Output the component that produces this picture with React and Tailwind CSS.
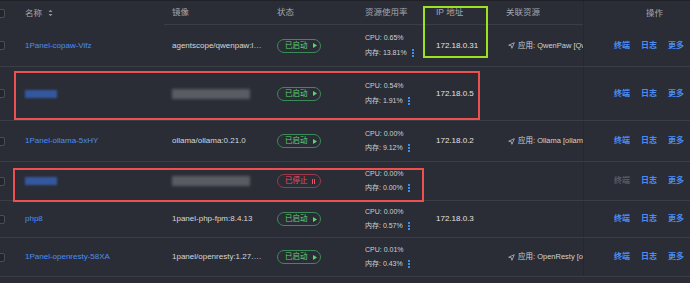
const rows = [
  { h: "h-[42px]", name: "1Panel-copaw-Vifz", image: "agentscope/qwenpaw:latest", running: true, cpu: "0.65%", mem: "13.81%", ip: "172.18.0.31", app: "应用: QwenPaw [QwenPaw]" },
  { h: "h-[54px]", blur: true, running: true, cpu: "0.54%", mem: "1.91%", ip: "172.18.0.5" },
  { h: "h-[41px]", name: "1Panel-ollama-5xHY", image: "ollama/ollama:0.21.0", running: true, cpu: "0.00%", mem: "9.12%", ip: "172.18.0.2", app: "应用: Ollama [ollama]" },
  { h: "h-[39px]", blur: true, running: false, cpu: "0.00%", mem: "0.00%", ip: "" },
  { h: "h-[37px]", name: "php8", image: "1panel-php-fpm:8.4.13", running: true, cpu: "0.00%", mem: "0.57%", ip: "172.18.0.3" },
  { h: "h-[39px]", name: "1Panel-openresty-58XA", image: "1panel/openresty:1.27.1.2-2-1-focal", running: true, cpu: "0.01%", mem: "0.43%", ip: "", app: "应用: OpenResty [openresty]" },
];

function Checkbox() {
  return <span className="block w-[9px] h-[9px] -ml-[4px] rounded-[2px] border border-[#4a4d56] bg-[#23252c]" />;
}

function SortIcon() {
  return (
    <svg width="5" height="8" viewBox="0 0 5 8" className="ml-[6px]">
      <path d="M0.5 3 L2.5 0.8 L4.5 3 Z" fill="#8e9199" />
      <path d="M0.5 5 L2.5 7.2 L4.5 5 Z" fill="#8e9199" />
    </svg>
  );
}

function StatusPill({ running }) {
  if (running) {
    return (
      <span className="inline-flex items-center h-[14px] w-[44px] pl-[7px] rounded-full border border-[#3c8a5a] text-[7.5px] text-[#5fd36f]">
        已启动
        <svg width="4" height="5" viewBox="0 0 4 5" className="ml-[5px]"><path d="M0 0 L4 2.5 L0 5 Z" fill="#5fd36f" /></svg>
      </span>
    );
  }
  return (
    <span className="inline-flex items-center h-[14px] w-[44px] pl-[7px] rounded-full border border-[#9b3a4b] text-[7.5px] text-[#ee4d66]">
      已停止
      <span className="ml-[4px] flex gap-[1.5px]">
        <span className="w-[1px] h-[5px] bg-[#ee4d66]" />
        <span className="w-[1px] h-[5px] bg-[#ee4d66]" />
      </span>
    </span>
  );
}

function DotsIcon() {
  return (
    <span className="ml-[5px] inline-flex flex-col gap-[1px]">
      <span className="w-[2px] h-[2px] bg-[#3a8ff0]" />
      <span className="w-[2px] h-[2px] bg-[#3a8ff0]" />
      <span className="w-[2px] h-[2px] bg-[#3a8ff0]" />
    </span>
  );
}

function PositionIcon() {
  return (
    <svg width="7" height="7" viewBox="0 0 10 10" className="mr-[3px] shrink-0">
      <path d="M1 4.6 L9 1 L5.6 9 L4.8 5.4 Z" fill="none" stroke="#c9cbd0" strokeWidth="1" strokeLinejoin="round" />
    </svg>
  );
}

export default function App() {
  return (
    <div className="relative w-[690px] h-[283px] overflow-hidden bg-[#2a2d35] border-t border-[#1f2127] text-[8px] text-[#d6d7da]" style={{ fontFamily: '"Liberation Sans", "Noto Sans CJK SC", sans-serif' }}>
      {/* header */}
      <div className="flex h-[24px] items-stretch text-[8.5px] text-[#a4a7ae]">
        <div className="w-[25px] flex items-center"><Checkbox /></div>
        <div className="w-[139px] flex items-center">名称<SortIcon /></div>
        <div className="w-[105px] pl-[8px] flex items-center border-b border-[#3a3d46]">镜像</div>
        <div className="w-[88px] pl-[8px] flex items-center border-b border-[#3a3d46]">状态</div>
        <div className="w-[71px] pl-[8px] flex items-center border-b border-[#3a3d46]">资源使用率</div>
        <div className="w-[70px] pl-[8px] flex items-center border-b border-[#3a3d46]">IP 地址</div>
        <div className="w-[85px] pl-[8px] flex items-center border-b border-[#3a3d46]">关联资源</div>
        <div className="w-[107px] pl-[62px] flex items-center border-l border-[#25272e]">操作</div>
      </div>

      {rows.map((r, i) => (
        <div key={i} className={`flex ${r.h} items-stretch border-b border-[#3a3d46]`}>
          <div className="w-[25px] flex items-center"><Checkbox /></div>
          <div className="w-[139px] flex items-center text-[#4a8ef5]">
            {r.blur ? <span className="w-[32px] h-[8px] bg-[#3358a0] blur-[1px]" /> : r.name}
          </div>
          <div className="w-[105px] pl-[8px] flex items-center">
            {r.blur ? (
              <span className="w-[78px] h-[10px] bg-[#5a5c63] blur-[1.5px]" />
            ) : (
              <span className="max-w-[90px] truncate">{r.image}</span>
            )}
          </div>
          <div className="w-[88px] pl-[8px] flex items-center"><StatusPill running={r.running} /></div>
          <div className="w-[71px] pl-[8px] flex flex-col justify-center gap-[4px] text-[7px] text-[#cfd0d4]">
            <span>CPU: {r.cpu}</span>
            <span className="flex items-center">内存: {r.mem}<DotsIcon /></span>
          </div>
          <div className="w-[70px] pl-[8px] flex items-center text-[8px] text-[#e2e3e6]">{r.ip}</div>
          <div className="w-[85px] pl-[10px] flex items-center overflow-hidden whitespace-nowrap text-[7.5px] text-[#d0d1d5]">
            {r.app && (<><PositionIcon />{r.app}</>)}
          </div>
          <div className="w-[107px] pl-[30px] flex items-center gap-[11px] font-bold text-[#4a8ef5] border-l border-[#25272e]">
            <span className={r.running ? "" : "text-[#575a63]"}>终端</span>
            <span>日志</span>
            <span>更多</span>
          </div>
        </div>
      ))}

      {/* annotation boxes */}
      <div className="absolute left-[423px] top-[5px] w-[65px] h-[52px] border-2 border-[#9de21f]" />
      <div className="absolute left-[14px] top-[70px] w-[466px] h-[49px] border-2 border-[#ee4f4f]" />
      <div className="absolute left-[13px] top-[167px] w-[411px] h-[34px] border-2 border-[#ee4f4f]" />
    </div>
  );
}
